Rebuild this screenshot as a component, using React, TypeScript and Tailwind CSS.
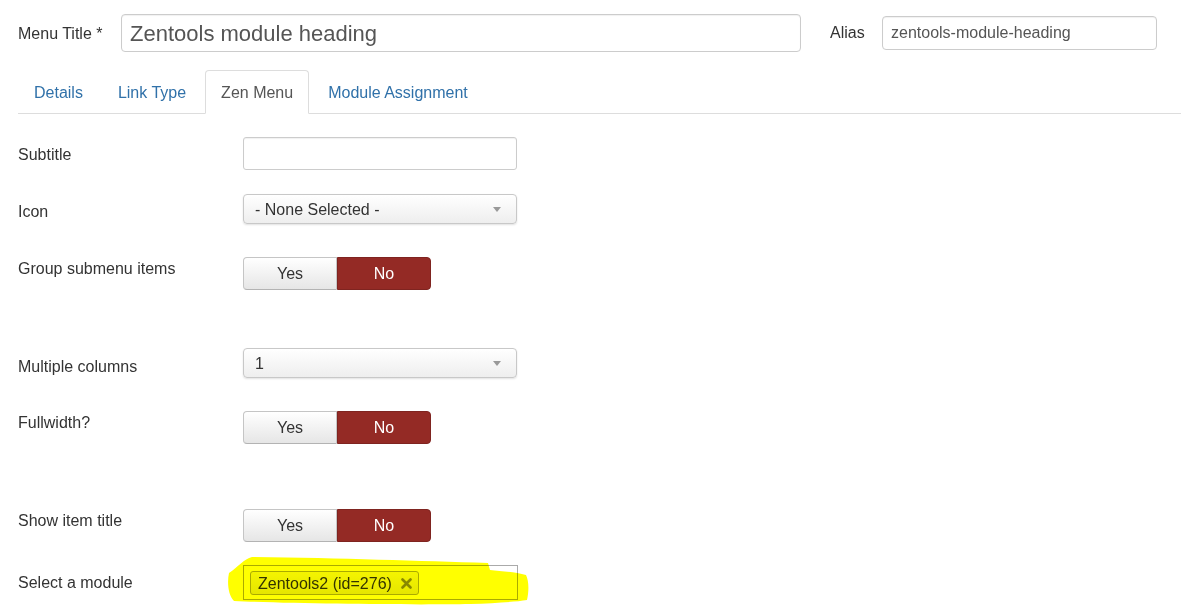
import React from 'react';

type RowProps = {
  label: string;
  labelPad: string;
  rowGap: string;
  children: React.ReactNode;
};

function Row({ label, labelPad, rowGap, children }: RowProps) {
  return (
    <div className={`flex ${rowGap}`}>
      <div className={`w-[225px] shrink-0 text-[16px] leading-[18px] text-[#333] ${labelPad}`}>{label}</div>
      <div>{children}</div>
    </div>
  );
}

function Toggle() {
  return (
    <div className="flex h-[33px] w-[188px] text-[16px]">
      <button className="w-[94px] rounded-l-[4px] border border-[#c5c5c5] border-b-[#b3b3b3] bg-gradient-to-b from-white to-[#e6e6e6] pt-[1px] text-[#333]">
        Yes
      </button>
      <button className="w-[94px] rounded-r-[4px] border border-[#7f2420] bg-[#942a25] pt-[1px] text-white">No</button>
    </div>
  );
}

function Select({ value }: { value: string }) {
  return (
    <div className="flex h-[30px] w-[274px] items-center justify-between rounded-[4px] border border-[#c8c8c8] bg-gradient-to-b from-white to-[#eeeeee] pl-[11px] pr-[15px] pt-[1px] text-[16px] text-[#333] shadow-[0_1px_2px_rgba(0,0,0,0.12)]">
      <span>{value}</span>
      <svg width="8" height="5" viewBox="0 0 8 5">
        <path d="M0 0 L8 0 L4 5 Z" fill="#999" />
      </svg>
    </div>
  );
}

export default function App() {
  const tabs = ['Details', 'Link Type', 'Zen Menu', 'Module Assignment'];

  return (
    <div className="relative h-[614px] w-full overflow-hidden bg-white font-['Liberation_Sans',Arial,sans-serif]">
      {/* Title + alias */}
      <div className="flex items-center pl-[18px] pt-[14px]">
        <span className="w-[103px] pt-[2px] text-[16px] text-[#333]">Menu Title *</span>
        <div className="flex h-[38px] w-[680px] items-center rounded-[4px] border border-[#ccc] pl-[8px] text-[22px] text-[#555] shadow-[inset_0_1px_1px_rgba(0,0,0,0.06)]">
          Zentools module heading
        </div>
        <span className="ml-[29px] w-[52px] text-[16px] text-[#333]">Alias</span>
        <div className="flex h-[34px] w-[275px] items-center rounded-[4px] border border-[#ccc] pl-[8px] text-[16px] text-[#555] shadow-[inset_0_1px_1px_rgba(0,0,0,0.06)]">
          zentools-module-heading
        </div>
      </div>

      {/* Tabs */}
      <div className="ml-[18px] mt-[18px] flex border-b border-[#ddd]">
        {tabs.map((t) => (
          <div
            key={t}
            className={
              t === 'Zen Menu'
                ? '-mb-px mr-[3px] flex h-[44px] items-center rounded-t-[4px] border border-[#ddd] border-b-white bg-white px-[15px] pt-[2px] text-[16px] text-[#555]'
                : 'mr-[3px] flex h-[43px] items-center border border-transparent px-[15px] pt-[2px] text-[16px] text-[#3071a9]'
            }
          >
            {t}
          </div>
        ))}
      </div>

      {/* Form */}
      <div className="pl-[18px] pt-[23px]">
        <Row label="Subtitle" labelPad="pt-[9px]" rowGap="mb-[24px]">
          <div className="h-[33px] w-[274px] rounded-[3px] border border-[#ccc] shadow-[inset_0_1px_1px_rgba(0,0,0,0.06)]" />
        </Row>
        <Row label="Icon" labelPad="pt-[9px]" rowGap="mb-[33px]">
          <Select value="- None Selected -" />
        </Row>
        <Row label="Group submenu items" labelPad="pt-[3px]" rowGap="mb-[58px]">
          <Toggle />
        </Row>
        <Row label="Multiple columns" labelPad="pt-[10px]" rowGap="mb-[33px]">
          <Select value="1" />
        </Row>
        <Row label="Fullwidth?" labelPad="pt-[3px]" rowGap="mb-[65px]">
          <Toggle />
        </Row>
        <Row label="Show item title" labelPad="pt-[3px]" rowGap="mb-[23px]">
          <Toggle />
        </Row>
        <Row label="Select a module" labelPad="pt-[9px]" rowGap="mb-0">
          <div className="flex h-[35px] w-[275px] items-start border border-[#aaa] pl-[6px] pt-[5px]">
            <div className="flex h-[24px] items-center gap-[9px] rounded-[3px] border border-[#aaa] bg-gradient-to-b from-[#f4f4f4] to-[#e6e6e6] pl-[7px] pr-[6px] pt-[1px] text-[16px] text-[#333]">
              <span>Zentools2 (id=276)</span>
              <svg width="11" height="11" viewBox="0 0 11 11">
                <path d="M1.5 1.5 L9.5 9.5 M9.5 1.5 L1.5 9.5" stroke="#888" strokeWidth="2.6" strokeLinecap="round" />
              </svg>
            </div>
          </div>
        </Row>
      </div>

      {/* highlighter stroke over the module field */}
      <svg className="pointer-events-none absolute left-0 top-0 mix-blend-multiply" width="1181" height="614" viewBox="0 0 1181 614">
        <path
          d="M229 573 C227 582 228 595 234 601 C300 604 420 605 470 604 C495 603 515 602 527 600 C529 591 529 581 526 575 C515 572 500 571 490 570 L488 563 C420 561 340 558 252 557 C244 559 238 567 229 573 Z"
          fill="#ffff00"
        />
      </svg>
    </div>
  );
}
